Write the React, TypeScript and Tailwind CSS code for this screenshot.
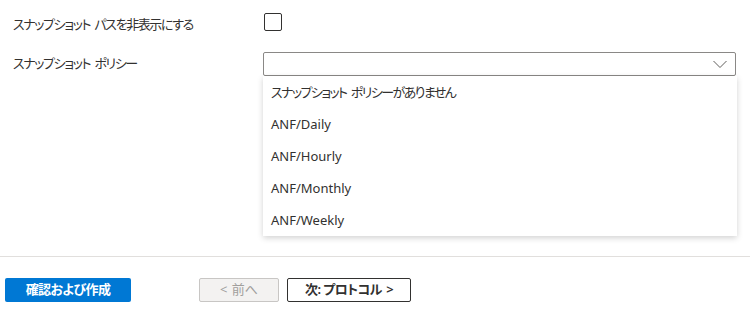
import React from "react";

const font = { fontFamily: '"Noto Sans", "Noto Sans CJK JP", sans-serif' };

const Sp = () => <span className="tracking-[1px]">&nbsp;</span>;

export default function App() {
  const items = ["ANF/Daily", "ANF/Hourly", "ANF/Monthly", "ANF/Weekly"];
  return (
    <div className="w-[750px] h-[314px] bg-white text-[#323130] text-[13px] overflow-hidden [font-feature-settings:'palt']" style={font}>
      <div className="h-[256px] pl-[13px] pt-[13px]">
        <div className="flex items-center h-[18px]">
          <div className="w-[251px] tracking-[-1.4px] pt-[6px]">
            <span>スナップショット<Sp />パスを非表示にする</span>
          </div>
          <div className="w-[18px] h-[18px] border border-[#323130] rounded-[2px]" />
        </div>
        <div className="flex items-center h-[24px] mt-[21px]">
          <div className="w-[250px] tracking-[-1.4px]">
            <span>スナップショット<Sp />ポリシー</span>
          </div>
          <div className="relative w-[473px] h-[24px] border border-[#8a8886] rounded-[2px] flex items-center justify-end pr-[7px]">
            <svg width="16" height="9" viewBox="0 0 16 9" fill="none">
              <path d="M1.5 1 L8 7.5 L14.5 1" stroke="#605e5c" strokeWidth="1" />
            </svg>
            <div className="absolute left-[-1px] top-[23px] w-[474px] bg-white shadow-[0_2px_6px_rgba(0,0,0,0.18)] z-10">
              <div className="h-[32px] flex items-center pl-[8px] pt-[1px] tracking-[-1.6px]">
                <span>スナップショット<Sp />ポリシーがありません</span>
              </div>
              {items.map((t) => (
                <div key={t} className="h-[32px] flex items-center pl-[8px] pt-[1px]">
                  {t}
                </div>
              ))}
            </div>
          </div>
        </div>
      </div>
      <div className="border-t border-[#e1dfdd]" />
      <div className="flex items-center pl-[5px] pt-[21px]">
        <button className="w-[126px] h-[24px] bg-[#0078d4] text-white font-semibold rounded-[2px] flex items-center justify-center tracking-[-0.6px]">
          確認および作成
        </button>
        <button className="ml-[68px] w-[80px] h-[24px] bg-[#f3f2f1] border border-[#c8c6c4] text-[#a19f9d] rounded-[2px] flex items-center justify-center">
          <span>&lt;<Sp />前へ</span>
        </button>
        <button className="ml-[8px] w-[124px] h-[24px] bg-white border border-[#323130] font-semibold rounded-[2px] flex items-center justify-center tracking-[-0.6px]">
          <span>次: プロトコル<Sp />&gt;</span>
        </button>
      </div>
    </div>
  );
}
